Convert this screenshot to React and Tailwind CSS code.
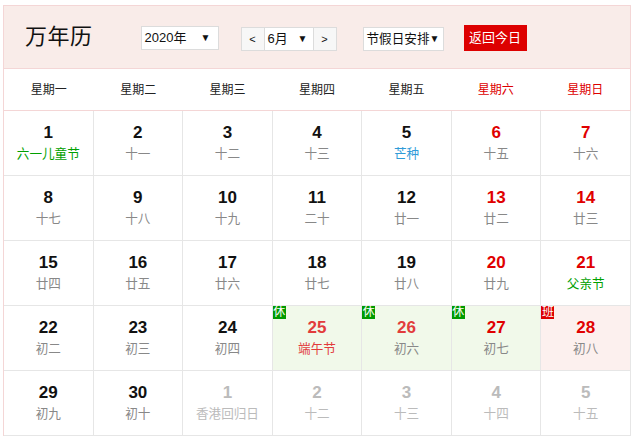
import React from "react";

const FONT = { fontFamily: '"Liberation Sans", "Noto Sans CJK SC", sans-serif' };

const WEEK = ["星期一", "星期二", "星期三", "星期四", "星期五", "星期六", "星期日"];

// type: n = normal lunar, g = green festival, b = solar term, h = holiday text, o = other month
const DAYS = [
  [1, "六一儿童节", "g"], [2, "十一"], [3, "十二"], [4, "十三"], [5, "芒种", "b"], [6, "十五"], [7, "十六"],
  [8, "十七"], [9, "十八"], [10, "十九"], [11, "二十"], [12, "廿一"], [13, "廿二"], [14, "廿三"],
  [15, "廿四"], [16, "廿五"], [17, "廿六"], [18, "廿七"], [19, "廿八"], [20, "廿九"], [21, "父亲节", "g"],
  [22, "初二"], [23, "初三"], [24, "初四"], [25, "端午节", "h", "rest"], [26, "初六", "n", "rest"], [27, "初七", "n", "rest"], [28, "初八", "n", "work"],
  [29, "初九"], [30, "初十"], [1, "香港回归日", "o"], [2, "十二", "o"], [3, "十三", "o"], [4, "十四", "o"], [5, "十五", "o"],
];

function Arrow() {
  return <span className="text-[10px] leading-none text-[#111]">▼</span>;
}

function Cell({ day, lunar, type = "n", mark, col }) {
  const weekend = col >= 5;
  let numCls = "text-[#111]";
  if (type === "o") numCls = "text-[#bbb]";
  else if (mark === "rest" && !weekend) numCls = "text-[#e23c3c]";
  else if (weekend) numCls = "text-[#e00000]";

  let lunarCls = "text-[#888]";
  if (type === "g") lunarCls = "text-[#00a000]";
  if (type === "b") lunarCls = "text-[#2f9bd8]";
  if (type === "h") lunarCls = "text-[#e23c3c]";
  if (type === "o") lunarCls = "text-[#bbb]";

  let bg = "bg-white";
  if (mark === "rest") bg = "bg-[#f1f9ea]";
  if (mark === "work") bg = "bg-[#fcf0ee]";

  return (
    <div className={`relative h-[65px] border-r border-b border-[#e6e6e6] flex flex-col items-center pt-[12px] ${bg}`}>
      {mark && (
        <span
          className={`absolute top-0 left-0 w-[13px] h-[13px] text-[12px] leading-[13px] text-white text-center ${
            mark === "rest" ? "bg-[#009a00]" : "bg-[#dd0000]"
          }`}
        >
          {mark === "rest" ? "休" : "班"}
        </span>
      )}
      <span className={`text-[17px] font-bold leading-[20px] ${numCls}`}>{day}</span>
      <span className={`mt-[3px] text-[12.6px] leading-[16px] whitespace-nowrap ${lunarCls}`}>{lunar}</span>
    </div>
  );
}

export default function App() {
  return (
    <div className="pt-[5px] pl-[3px] w-[636px] h-[439px] bg-white" style={FONT}>
      <div className="w-[628px]">
        {/* header */}
        <div className="h-[64px] border border-[#f4d6d6] bg-[#f9ece9] flex items-center pl-[21px]">
          <div className="text-[22px] leading-none text-[#111] tracking-[0.5px]">万年历</div>

          <div className="ml-[48px] mt-[2px] w-[78px] h-[24px] bg-white border border-[#dcdcdc] flex items-center justify-between pl-[3px] pr-[7px] text-[13px] text-[#111]">
            <span>2020年</span>
            <Arrow />
          </div>

          <div className="ml-[22px] mt-[4px] flex h-[24px]">
            <div className="w-[24px] bg-[#f7f7f7] border border-[#dcdcdc] flex items-center justify-center text-[11px] text-[#111]">&lt;</div>
            <div className="w-[48px] bg-white border-y border-[#dcdcdc] flex items-center justify-between pl-[3px] pr-[5px] text-[13px] text-[#111]">
              <span>6月</span>
              <Arrow />
            </div>
            <div className="w-[24px] bg-[#f7f7f7] border border-[#dcdcdc] flex items-center justify-center text-[11px] text-[#111]">&gt;</div>
          </div>

          <div className="ml-[26px] mt-[4px] w-[81px] h-[24px] bg-white border border-[#dcdcdc] flex items-center justify-between pl-[3px] pr-[3px] text-[12.6px] text-[#111] whitespace-nowrap">
            <span>节假日安排</span>
            <Arrow />
          </div>

          <div className="ml-[20px] mt-[2px] w-[63px] h-[26px] bg-[#dd0000] flex items-center justify-center text-[13px] text-white">
            返回今日
          </div>
        </div>

        {/* weekday row */}
        <div className="h-[42px] border-x border-b border-[#f4d6d6] grid grid-cols-7 items-center bg-white">
          {WEEK.map((w, i) => (
            <div key={w} className={`text-center text-[12px] ${i >= 5 ? "text-[#dd0000]" : "text-[#222]"}`}>
              {w}
            </div>
          ))}
        </div>

        {/* days */}
        <div className="border-l border-[#f4d6d6] grid grid-cols-7">
          {DAYS.map(([day, lunar, type, mark], i) => (
            <Cell key={i} day={day} lunar={lunar} type={type} mark={mark} col={i % 7} />
          ))}
        </div>
      </div>
    </div>
  );
}
